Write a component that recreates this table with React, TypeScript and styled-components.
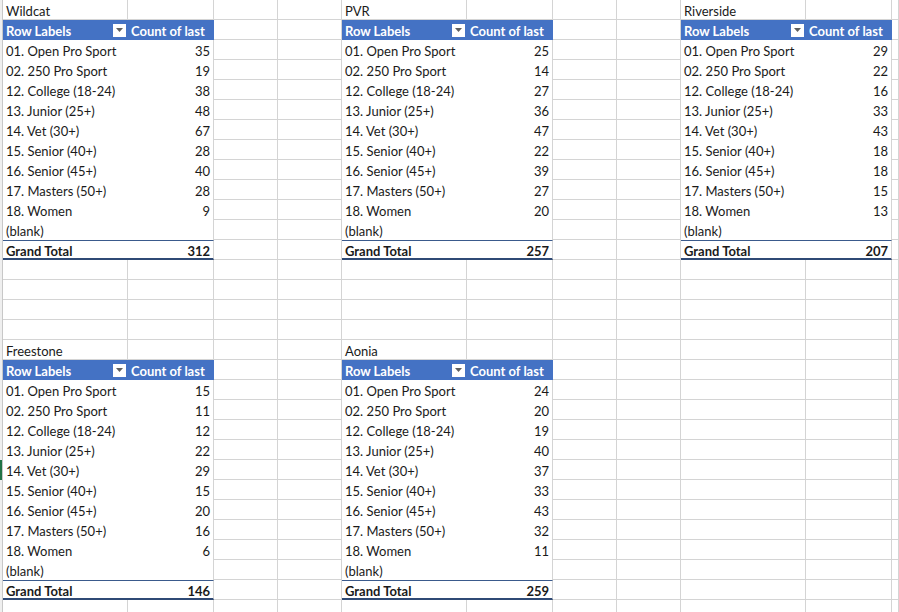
import React from 'react';
import styled, { createGlobalStyle, css } from 'styled-components';

const GlobalStyle = createGlobalStyle`
  html, body { margin: 0; padding: 0; background: #ffffff; }
  body { font-family: Lato, "Liberation Sans", sans-serif; overflow: hidden; }
  #root { width: 899px; height: 612px; overflow: hidden; }
`;

const COLS = '3px 125px 86px 64px 64px 125px 86px 64px 64px 125px 86px 1fr';
const GRID = '#d4d4d4';

type Kind =
  | 'empty'
  | 'title'
  | 'headLabel'
  | 'headValue'
  | 'label'
  | 'value'
  | 'totalLabel'
  | 'totalValue';

const Sheet = styled.div`
  width: 899px;
  height: 612px;
  overflow: hidden;
  background: #fff;
`;

const Row = styled.div`
  display: grid;
  grid-template-columns: ${COLS};
  height: 20px;
`;

const Gutter = styled.div<{ $active?: boolean }>`
  box-sizing: border-box;
  background: ${(p) => (p.$active ? '#217346' : '#efefef')};
  border-right: 1px solid #c8c8c8;
`;

const kindStyles: Record<Kind, ReturnType<typeof css>> = {
  empty: css`
    border-right: 1px solid ${GRID};
    border-bottom: 1px solid ${GRID};
  `,
  title: css`
    border-right: 1px solid ${GRID};
    border-bottom: 1px solid ${GRID};
    padding-left: 3px;
  `,
  headLabel: css`
    background: #4472c4;
    color: #ffffff;
    font-weight: 700;
    padding-left: 3px;
    padding-right: 2px;
    justify-content: space-between;
  `,
  headValue: css`
    background: #4472c4;
    color: #ffffff;
    font-weight: 700;
    padding-left: 3px;
  `,
  label: css`
    padding-left: 3px;
  `,
  value: css`
    justify-content: flex-end;
    padding-right: 3px;
    border-right: 1px solid ${GRID};
  `,
  totalLabel: css`
    font-weight: 700;
    padding-left: 3px;
    border-top: 1px solid #3a5a8c;
    border-bottom: 2px solid #2f4a75;
  `,
  totalValue: css`
    font-weight: 700;
    justify-content: flex-end;
    padding-right: 3px;
    border-top: 1px solid #3a5a8c;
    border-bottom: 2px solid #2f4a75;
    border-right: 1px solid ${GRID};
  `,
};

const Cell = styled.div<{ $kind: Kind }>`
  box-sizing: border-box;
  display: flex;
  align-items: center;
  height: 20px;
  overflow: hidden;
  white-space: nowrap;
  font-size: 13px;
  color: #1a1a1a;
  background: #fff;
  ${(p) => kindStyles[p.$kind]}
`;

const CellText = styled.span`
  line-height: 20px;
  padding-top: 2px;
`;

const DropButton = styled.span`
  box-sizing: border-box;
  width: 13px;
  height: 13px;
  background: #ffffff;
  display: flex;
  align-items: center;
  justify-content: center;
  flex: 0 0 auto;
`;

const Arrow = () => (
  <svg width="7" height="4" viewBox="0 0 7 4">
    <path d="M0 0 L7 0 L3.5 4 Z" fill="#5f5f5f" />
  </svg>
);

const LABELS = [
  '01. Open Pro Sport',
  '02. 250 Pro Sport',
  '12. College (18-24)',
  '13. Junior (25+)',
  '14. Vet (30+)',
  '15. Senior (40+)',
  '16. Senior (45+)',
  '17. Masters (50+)',
  '18. Women',
  '(blank)',
];

type Table = { name: string; values: number[]; total: number; row: number; col: number };

const TABLES: Table[] = [
  { name: 'Wildcat', values: [35, 19, 38, 48, 67, 28, 40, 28, 9], total: 312, row: 1, col: 1 },
  { name: 'PVR', values: [25, 14, 27, 36, 47, 22, 39, 27, 20], total: 257, row: 1, col: 5 },
  { name: 'Riverside', values: [29, 22, 16, 33, 43, 18, 18, 15, 13], total: 207, row: 1, col: 9 },
  { name: 'Freestone', values: [15, 11, 12, 22, 29, 15, 20, 16, 6], total: 146, row: 18, col: 1 },
  { name: 'Aonia', values: [24, 20, 19, 40, 37, 33, 43, 32, 11], total: 259, row: 18, col: 5 },
];

type CellData = { kind: Kind; text?: string };

function buildCells(): Map<string, CellData> {
  const m = new Map<string, CellData>();
  const set = (r: number, c: number, d: CellData) => m.set(`${r}:${c}`, d);
  for (const t of TABLES) {
    set(t.row, t.col, { kind: 'title', text: t.name });
    set(t.row + 1, t.col, { kind: 'headLabel', text: 'Row Labels' });
    set(t.row + 1, t.col + 1, { kind: 'headValue', text: 'Count of last' });
    LABELS.forEach((lab, i) => {
      const v = t.values[i];
      set(t.row + 2 + i, t.col, { kind: 'label', text: lab });
      set(t.row + 2 + i, t.col + 1, { kind: 'value', text: v === undefined ? '' : String(v) });
    });
    set(t.row + 12, t.col, { kind: 'totalLabel', text: 'Grand Total' });
    set(t.row + 12, t.col + 1, { kind: 'totalValue', text: String(t.total) });
  }
  return m;
}

const CELLS = buildCells();
const ROW_COUNT = 31;
const COL_COUNT = 11;
const ACTIVE_ROW = 24;

export default function App() {
  const rows = [];
  for (let r = 1; r <= ROW_COUNT; r++) {
    const cells = [];
    for (let c = 1; c <= COL_COUNT; c++) {
      const d = CELLS.get(`${r}:${c}`) ?? { kind: 'empty' as Kind };
      cells.push(
        <Cell key={c} $kind={d.kind}>
          {d.text ? <CellText>{d.text}</CellText> : null}
          {d.kind === 'headLabel' ? (
            <DropButton>
              <Arrow />
            </DropButton>
          ) : null}
        </Cell>
      );
    }
    rows.push(
      <Row key={r}>
        <Gutter $active={r === ACTIVE_ROW} />
        {cells}
      </Row>
    );
  }
  return (
    <>
      <GlobalStyle />
      <Sheet>{rows}</Sheet>
    </>
  );
}
